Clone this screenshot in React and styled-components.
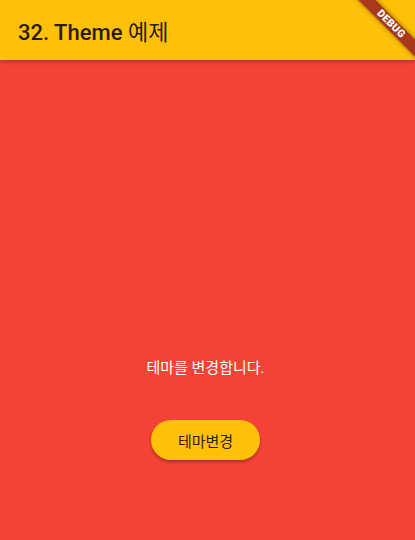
import React from "react";
import styled, { createGlobalStyle } from "styled-components";

const Global = createGlobalStyle`
  html, body { margin: 0; padding: 0; }
  body {
    width: 415px;
    height: 540px;
    overflow: hidden;
    font-family: Roboto, "Noto Sans CJK KR", sans-serif;
  }
`;

const Screen = styled.div`
  position: relative;
  width: 415px;
  height: 540px;
  display: flex;
  flex-direction: column;
  background: #f44336;
  overflow: hidden;
`;

const AppBar = styled.header`
  height: 60px;
  flex: none;
  display: flex;
  align-items: center;
  padding: 0 18px;
  background: #ffc107;
  box-shadow: 0 2px 4px rgba(0, 0, 0, 0.25);
  position: relative;
  z-index: 1;
`;

const Title = styled.h1`
  margin: 0;
  font-family: Roboto, "Noto Sans CJK KR", sans-serif;
  font-size: 22px;
  font-weight: 500;
  color: rgba(0, 0, 0, 0.87);
`;

const Hangul = styled.span`
  font-weight: 400;
`;

const Body = styled.main`
  flex: 1;
  display: flex;
  flex-direction: column;
  align-items: center;
  padding-top: 298px;
  padding-right: 4px;
`;

const Message = styled.p`
  margin: 0;
  height: 20px;
  line-height: 20px;
  font-family: Roboto, "Noto Sans CJK KR", sans-serif;
  font-size: 15px;
  color: #ffffff;
`;

const Button = styled.button`
  margin-top: 42px;
  width: 109px;
  height: 40px;
  border: none;
  border-radius: 20px;
  background: #ffc107;
  color: rgba(0, 0, 0, 0.87);
  font-family: Roboto, "Noto Sans CJK KR", sans-serif;
  font-size: 15px;
  box-shadow: 0 2px 3px rgba(0, 0, 0, 0.3);
  cursor: pointer;
`;

const Ribbon = styled.div`
  position: absolute;
  left: ${391 - 45}px;
  top: ${24 - 6}px;
  width: 90px;
  height: 12px;
  transform: rotate(45deg);
  background: #a8391c;
  box-shadow: 0 0 5px rgba(0, 0, 0, 0.45);
  display: flex;
  align-items: center;
  justify-content: center;
  z-index: 2;
  color: #fff;
  font-family: Roboto, sans-serif;
  font-weight: 900;
  font-size: 10.5px;
  line-height: 1;
  letter-spacing: 0.3px;
`;

export default function App() {
  return (
    <>
      <Global />
      <Screen>
        <AppBar>
          <Title>
            32. Theme <Hangul>예제</Hangul>
          </Title>
        </AppBar>
        <Body>
          <Message>테마를 변경합니다.</Message>
          <Button>테마변경</Button>
        </Body>
        <Ribbon>DEBUG</Ribbon>
      </Screen>
    </>
  );
}
